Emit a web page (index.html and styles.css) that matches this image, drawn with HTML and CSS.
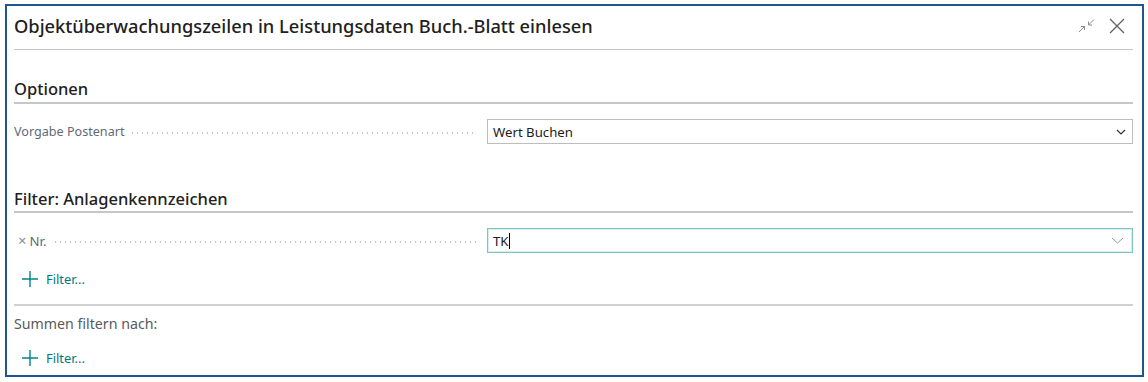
FILE: index.html
```html
<!DOCTYPE html>
<html lang="de">
<head>
<meta charset="UTF-8" />
<title>Objektüberwachungszeilen einlesen</title>
<link rel="stylesheet" href="styles.css">
</head>
<body>
<div class="dialog" role="dialog" aria-label="Objektüberwachungszeilen in Leistungsdaten Buch.-Blatt einlesen">
  <div class="dialog-header">
    <h1 class="dialog-title">Objektüberwachungszeilen in Leistungsdaten Buch.-Blatt einlesen</h1>
    <div class="header-actions">
      <button class="icon-btn" aria-label="Verkleinern">
        <svg width="17" height="14" viewBox="0 0 17 14" fill="none" stroke="#8c8c8c" stroke-width="1">
          <path d="M1 13 L6.5 7.5 M3 7.5 H6.5 V11" />
          <path d="M16 0.5 L10.5 6 M10.5 2.5 V6 H14" />
        </svg>
      </button>
      <button class="icon-btn" aria-label="Schließen">
        <svg width="16" height="16" viewBox="0 0 16 16" fill="none" stroke="#616161" stroke-width="1.3">
          <path d="M1 1 L15 15 M15 1 L1 15" />
        </svg>
      </button>
    </div>
  </div>

  <div class="section">
    <h2 class="section-title">Optionen</h2>
    <div class="field">
      <label class="field-label">Vorgabe Postenart</label>
      <div class="field-box">
        <span class="field-value">Wert Buchen</span>
        <svg class="chevron" width="10" height="6" viewBox="0 0 10 6" fill="none" stroke="#333" stroke-width="1.2"><path d="M1 1 L5 5 L9 1" /></svg>
      </div>
    </div>
  </div>

  <div class="section section-filter">
    <h2 class="section-title">Filter: Anlagenkennzeichen</h2>
    <div class="field">
      <label class="field-label"><span class="remove">×</span>Nr.</label>
      <div class="field-box focused">
        <span class="field-value">TK<span class="caret"></span></span>
        <svg class="chevron" width="13" height="7" viewBox="0 0 13 7" fill="none" stroke="#9a9a9a" stroke-width="1"><path d="M1 1 L6.5 6 L12 1" /></svg>
      </div>
    </div>
    <button class="add-filter">
      <svg width="16" height="16" viewBox="0 0 16 16" stroke="#008489" stroke-width="1.4"><path d="M8 0 V16 M0 8 H16" /></svg>
      <span>Filter...</span>
    </button>
  </div>

  <div class="totals">
    <div class="totals-label">Summen filtern nach:</div>
    <button class="add-filter">
      <svg width="16" height="16" viewBox="0 0 16 16" stroke="#008489" stroke-width="1.4"><path d="M8 0 V16 M0 8 H16" /></svg>
      <span>Filter...</span>
    </button>
  </div>
</div>
</body>
</html>
```

FILE: styles.css
```css
* {
  box-sizing: border-box;
}
body {
  margin: 0;
  background: #ffffff;
  font-family: 'Noto Sans', 'Open Sans', sans-serif;
  color: #212121;
}
.dialog {
  margin: 4px 0 0 5px;
  width: 1139px;
  height: 373px;
  border: 2px solid #1f5690;
  padding: 0 9px 0 7px;
  background: #fff;
}
.dialog-header {
  display: flex;
  align-items: center;
  justify-content: space-between;
  height: 44px;
  border-bottom: 1px solid #c6c6c6;
}
.dialog-title {
  margin: 0;
  font-size: 18.3px;
  font-weight: 500;
  line-height: 24px;
  padding-bottom: 3px;
}
.header-actions {
  display: flex;
  align-items: center;
  gap: 14px;
  margin-right: 8px;
  padding-bottom: 4px;
}
.icon-btn {
  border: none;
  background: none;
  padding: 0;
  display: flex;
  cursor: pointer;
}

.section-title {
  margin: 0;
  padding-top: 28px;
  height: 54px;
  line-height: 22px;
  font-size: 16.5px;
  font-weight: 500;
  border-bottom: 2px solid #c3c7cc;
}
.field {
  display: flex;
  align-items: center;
  margin-top: 15px;
  height: 25px;
}
.field-label {
  width: 473px;
  flex: none;
  display: flex;
  align-items: center;
  font-size: 12.6px;
  color: #5f6a78;
  white-space: nowrap;
  overflow: hidden;
}
.field-label::after {
  content: "";
  flex: 1;
  height: 2px;
  margin: 3px 10px 0 6px;
  background-image: radial-gradient(circle, #c2c5c9 0.7px, transparent 0.8px);
  background-size: 5px 2px;
  background-repeat: repeat-x;
}
.remove {
  color: #8a8f96;
  font-size: 15px;
  line-height: 1;
  margin: 0 3px 0 4px;
}
.section-filter .field-label {
  font-size: 13.2px;
}
.field-box {
  flex: 1;
  height: 25px;
  border: 1px solid #bdbdbd;
  display: flex;
  align-items: center;
  justify-content: space-between;
  padding: 0 6px 0 5px;
}
.field-box.focused {
  border: 1px solid #7fc3c3;
  box-shadow: inset 0 0 0 1px #d8eeee;
  padding-right: 8px;
}
.field-value {
  font-size: 13.2px;
  color: #212121;
  display: flex;
  align-items: center;
}
.caret {
  display: inline-block;
  width: 1px;
  height: 16px;
  background: #000;
}
.section-filter .section-title {
  padding-top: 44px;
  height: 69px;
}
.add-filter {
  display: flex;
  align-items: center;
  gap: 8px;
  border: none;
  background: none;
  padding: 0 0 0 8px;
  margin-top: 17px;
  font-family: inherit;
  font-size: 12.9px;
  color: #00787d;
  cursor: pointer;
}
.totals {
  margin-top: 16px;
  border-top: 2px solid #d0d0d0;
}
.totals-label {
  margin-top: 8px;
  font-size: 14.2px;
  line-height: 20px;
  color: #5a5a5a;
}
.totals .add-filter {
  margin-top: 15px;
}
```
